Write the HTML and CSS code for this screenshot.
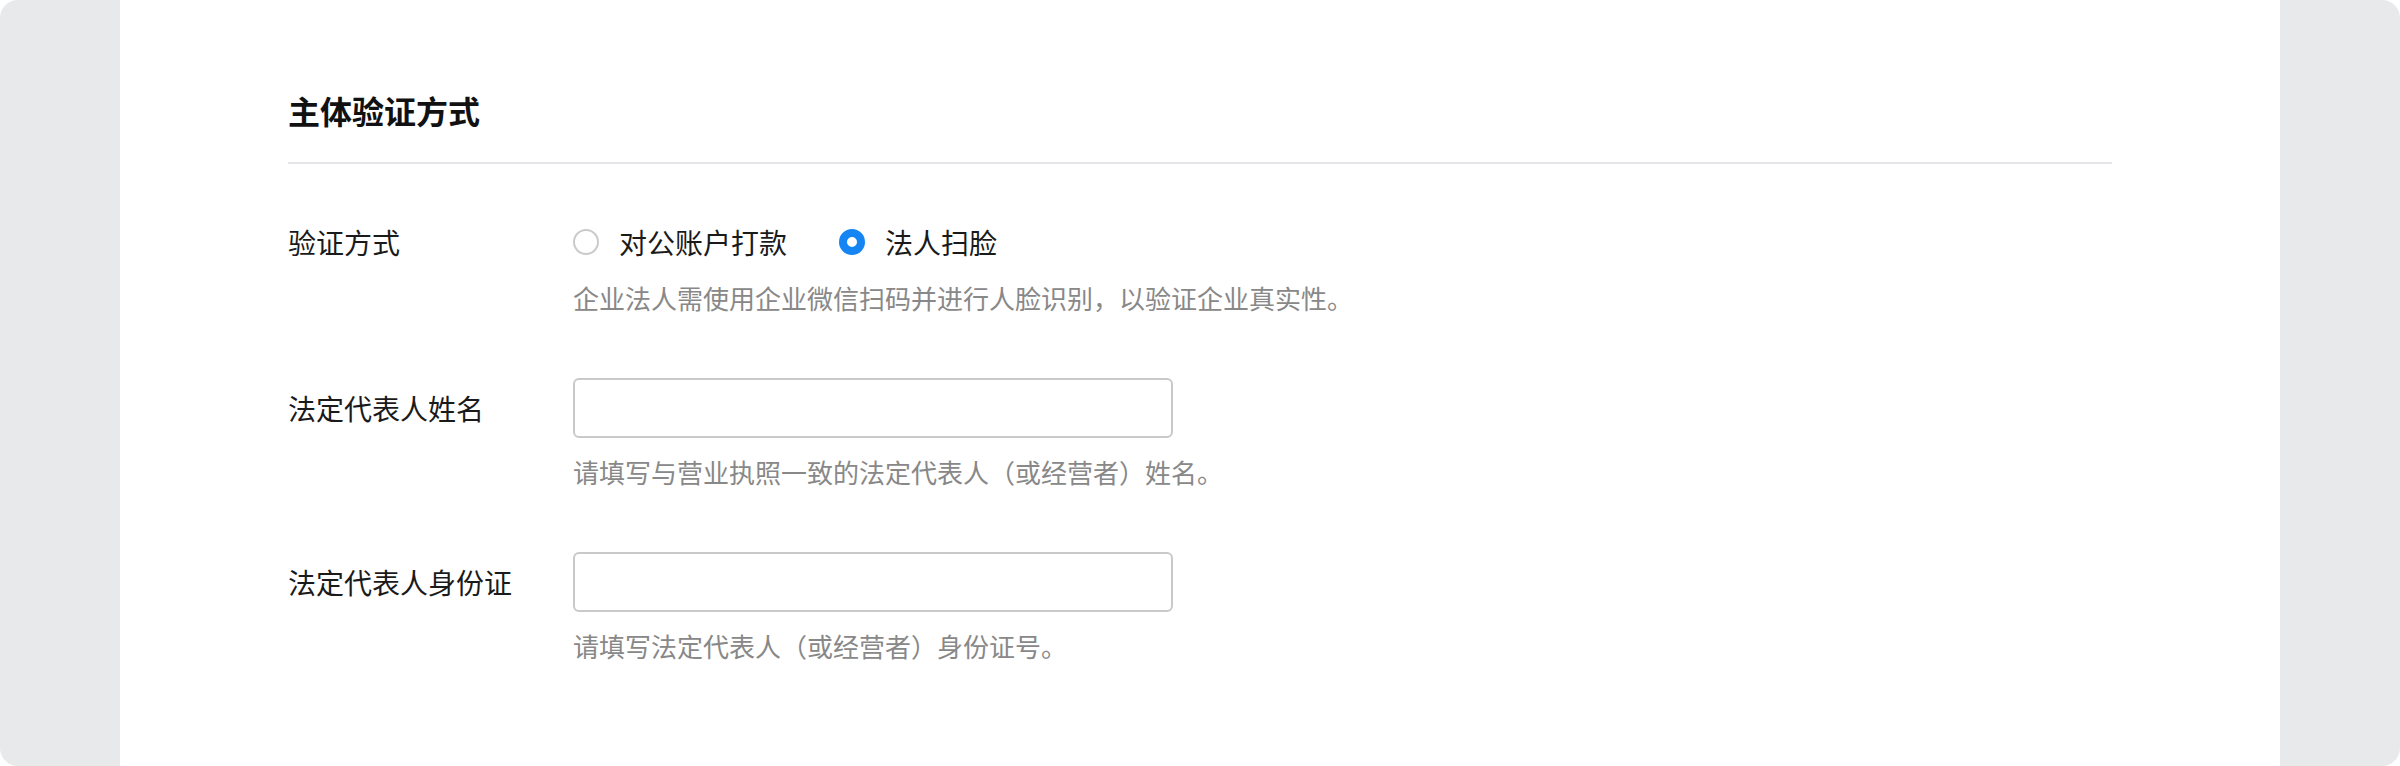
FILE: index.html
```html
<!DOCTYPE html>
<html lang="zh-CN">
<head>
    <meta charset="UTF-8">
    <meta name="viewport" content="width=device-width, initial-scale=1.0">
    <title>主体验证方式</title>
    <link rel="stylesheet" href="styles.css">
</head>
<body>
    <div class="frame">
        <div class="panel">
            <h2 class="section-title">主体验证方式</h2>

            <form class="verify-form">
                <!-- 验证方式 -->
                <div class="form-row">
                    <label class="form-label">验证方式</label>
                    <div class="radio-group">
                        <label class="radio-item">
                            <input type="radio" name="verify_type" value="transfer">
                            <span>对公账户打款</span>
                        </label>
                        <label class="radio-item">
                            <input type="radio" name="verify_type" value="face" checked>
                            <span>法人扫脸</span>
                        </label>
                    </div>
                    <p class="form-help">企业法人需使用企业微信扫码并进行人脸识别，以验证企业真实性。</p>
                </div>

                <!-- 法定代表人姓名 -->
                <div class="form-row">
                    <label class="form-label" for="legal-name">法定代表人姓名</label>
                    <input class="text-input" type="text" id="legal-name" name="legal_name">
                    <p class="form-help">请填写与营业执照一致的法定代表人（或经营者）姓名。</p>
                </div>

                <!-- 法定代表人身份证 -->
                <div class="form-row">
                    <label class="form-label" for="legal-id">法定代表人身份证</label>
                    <input class="text-input" type="text" id="legal-id" name="legal_id">
                    <p class="form-help">请填写法定代表人（或经营者）身份证号。</p>
                </div>
            </form>
        </div>
    </div>
</body>
</html>
```

FILE: styles.css
```css
* {
    box-sizing: border-box;
}

html, body {
    margin: 0;
    padding: 0;
    height: 766px;
    overflow: hidden;
    background-color: #ffffff;
}

body {
    font-family: "PingFang SC", "Noto Sans CJK SC", "Noto Sans", sans-serif;
    color: #1a1a1a;
}

.frame {
    height: 766px;
    padding: 0 120px;
    background-color: #e8e9eb;
    border-radius: 18px;
    overflow: hidden;
}

.panel {
    height: 100%;
    padding: 88px 168px 0;
    background-color: #ffffff;
}

.section-title {
    margin: 0;
    padding-bottom: 30px;
    font-size: 32px;
    line-height: 44px;
    font-weight: 700;
    color: #111;
    border-bottom: 2px solid #e6e6ea;
}

.verify-form {
    display: flex;
    flex-direction: column;
    gap: 62px;
    padding-top: 56px;
}

.form-row {
    display: grid;
    grid-template-columns: 285px 1fr;
    align-items: center;
}

.form-label {
    grid-column: 1;
    grid-row: 1;
    font-size: 28px;
    color: #1a1a1a;
}

.form-help {
    grid-column: 2;
    grid-row: 2;
    margin: 16px 0 0;
    font-size: 26px;
    line-height: 36px;
    color: #888888;
}

.radio-group {
    display: flex;
    align-items: center;
    gap: 52px;
    height: 44px;
}

.radio-item {
    display: flex;
    align-items: center;
    gap: 20px;
    font-size: 28px;
    color: #1a1a1a;
    cursor: pointer;
}

.radio-item input {
    appearance: none;
    margin: 0;
    width: 26px;
    height: 26px;
    border: 2px solid #cacaca;
    border-radius: 50%;
    background: #fff;
}

.radio-item input:checked {
    border: 8px solid #1585f4;
}

.text-input {
    width: 600px;
    height: 60px;
    padding: 0 16px;
    border: 2px solid #c9c9c9;
    border-radius: 6px;
    font-size: 28px;
    font-family: inherit;
    outline: none;
}

.text-input:focus {
    border-color: #1585f4;
}
```
